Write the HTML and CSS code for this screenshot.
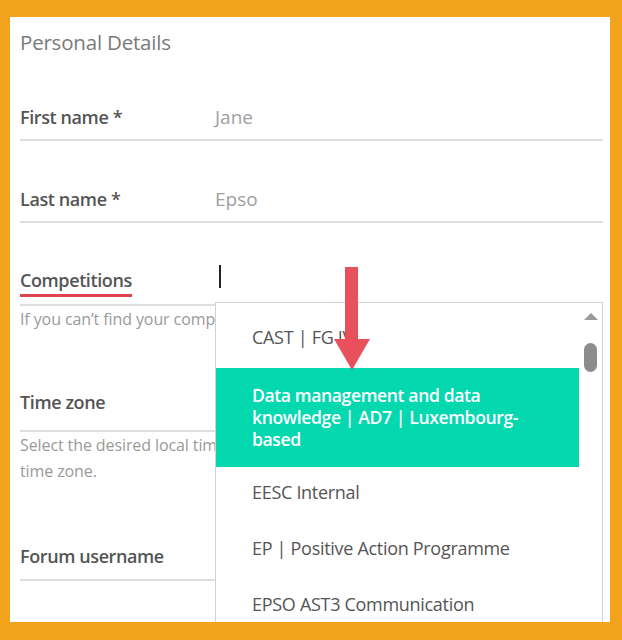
FILE: index.html
```html
<!DOCTYPE html>
<html lang="en">
<head>
<meta charset="utf-8">
<title>Personal Details</title>
<link rel="stylesheet" href="styles.css">
</head>
<body>
<div class="frame">
  <div class="panel">
    <h2 class="title">Personal Details</h2>
    <div class="form">
      <div class="field f1">
        <div class="row h44">
          <div class="label">First name *</div>
          <div class="value">Jane</div>
        </div>
      </div>
      <div class="field f2">
        <div class="row h44">
          <div class="label">Last name *</div>
          <div class="value">Epso</div>
        </div>
      </div>
      <div class="field f3">
        <div class="row h48 bottom">
          <div class="label active">Competitions</div>
          <div class="value caret-cell"><span class="caret"></span></div>
        </div>
        <div class="help">If you can’t find your competition in the list, please contact us.</div>
      </div>
      <div class="field f4">
        <div class="row h56">
          <div class="label">Time zone</div>
          <div class="value"></div>
        </div>
        <div class="help">Select the desired local time zone. Leave it empty to use the default<br>time zone.</div>
      </div>
      <div class="field f5">
        <div class="row h46">
          <div class="label">Forum username</div>
          <div class="value"></div>
        </div>
      </div>
    </div>

    <div class="dropdown">
      <ul class="options">
        <li class="option">CAST | FG IV</li>
        <li class="option selected">Data management and data knowledge | AD7 | Luxembourg-based</li>
        <li class="option">EESC Internal</li>
        <li class="option">EP | Positive Action Programme</li>
        <li class="option">EPSO AST3 Communication</li>
      </ul>
      <div class="scrollbar">
        <span class="scroll-up"></span>
        <span class="scroll-thumb"></span>
      </div>
    </div>

    <svg class="pointer" width="36" height="103" viewBox="0 0 36 103" aria-hidden="true">
      <rect x="11" y="0" width="13" height="76" fill="#e8505b"/>
      <polygon points="0,72 36,72 18,103" fill="#e8505b"/>
    </svg>
  </div>
</div>
</body>
</html>
```

FILE: styles.css
```css
* { box-sizing: border-box; }

html, body {
  margin: 0;
  padding: 0;
}

body {
  width: 622px;
  height: 640px;
  background: #f0a31b;
  font-family: "Open Sans", "Noto Sans", "Liberation Sans", sans-serif;
  overflow: hidden;
}

.frame {
  height: 640px;
  padding: 17px 12px 18px 10px;
}

.panel {
  position: relative;
  height: 605px;
  background: #ffffff;
  padding: 0 7px 0 10px;
  overflow: hidden;
}

.title {
  margin: 0;
  padding-top: 12px;
  font-size: 20.5px;
  line-height: 26px;
  font-weight: 400;
  color: #7a7a7a;
  letter-spacing: -0.2px;
}

.form {
  display: flex;
  flex-direction: column;
}

.f1 { margin-top: 40px; }
.f2 { margin-top: 36px; }
.f3 { margin-top: 33px; }
.f4 { margin-top: 42px; }
.f5 { margin-top: 49px; }

.row {
  display: flex;
  align-items: center;
  border-bottom: 2px solid #dedede;
}

.h44 { height: 46px; }
.h46 { height: 48px; }
.h48 { height: 50px; }
.h56 { height: 58px; }

.row.bottom {
  align-items: flex-end;
  padding-bottom: 7px;
}

.label {
  width: 195px;
  flex: none;
  font-size: 18px;
  line-height: 24px;
  font-weight: 600;
  color: #555555;
  letter-spacing: -0.4px;
}

.label.active {
  width: auto;
  margin-right: 80px;
  padding-bottom: 2px;
  border-bottom: 3px solid #e04451;
}

.value {
  flex: 1;
  font-size: 19px;
  line-height: 24px;
  color: #a0a0a0;
  font-weight: 400;
}

.caret-cell {
  align-self: center;
  display: flex;
  align-items: center;
  height: 24px;
  padding-left: 7px;
}

.caret {
  display: block;
  width: 2px;
  height: 23px;
  background: #222222;
}

.help {
  width: 195px;
  overflow: hidden;
  font-size: 16px;
  line-height: 26px;
  color: #9a9a9a;
  white-space: nowrap;
  letter-spacing: -0.1px;
}

.dropdown {
  position: absolute;
  top: 285px;
  left: 205px;
  width: 388px;
  height: 330px;
  background: #ffffff;
  border: 1px solid #d2d2d2;
  display: flex;
  z-index: 2;
}

.options {
  list-style: none;
  margin: 0;
  padding: 9px 0 0 0;
  flex: 1;
}

.option {
  padding: 14px 20px 20px 36px;
  font-size: 18px;
  line-height: 22px;
  color: #555555;
  letter-spacing: -0.3px;
}

.option.selected {
  background: #03d8af;
  color: #ffffff;
  font-weight: 600;
  font-size: 17.6px;
  letter-spacing: -0.4px;
  padding: 16px 37px 17px 36px;
}

.scrollbar {
  width: 23px;
  flex: none;
  display: flex;
  flex-direction: column;
  align-items: center;
  padding-top: 10px;
}

.scroll-up {
  display: block;
  width: 0;
  height: 0;
  border-left: 7px solid transparent;
  border-right: 7px solid transparent;
  border-bottom: 7px solid #9a9a9a;
}

.scroll-thumb {
  display: block;
  width: 13px;
  height: 29px;
  margin-top: 23px;
  border-radius: 7px;
  background: #8c8c8c;
}

.pointer {
  position: absolute;
  top: 250px;
  left: 324px;
  z-index: 3;
}
```
